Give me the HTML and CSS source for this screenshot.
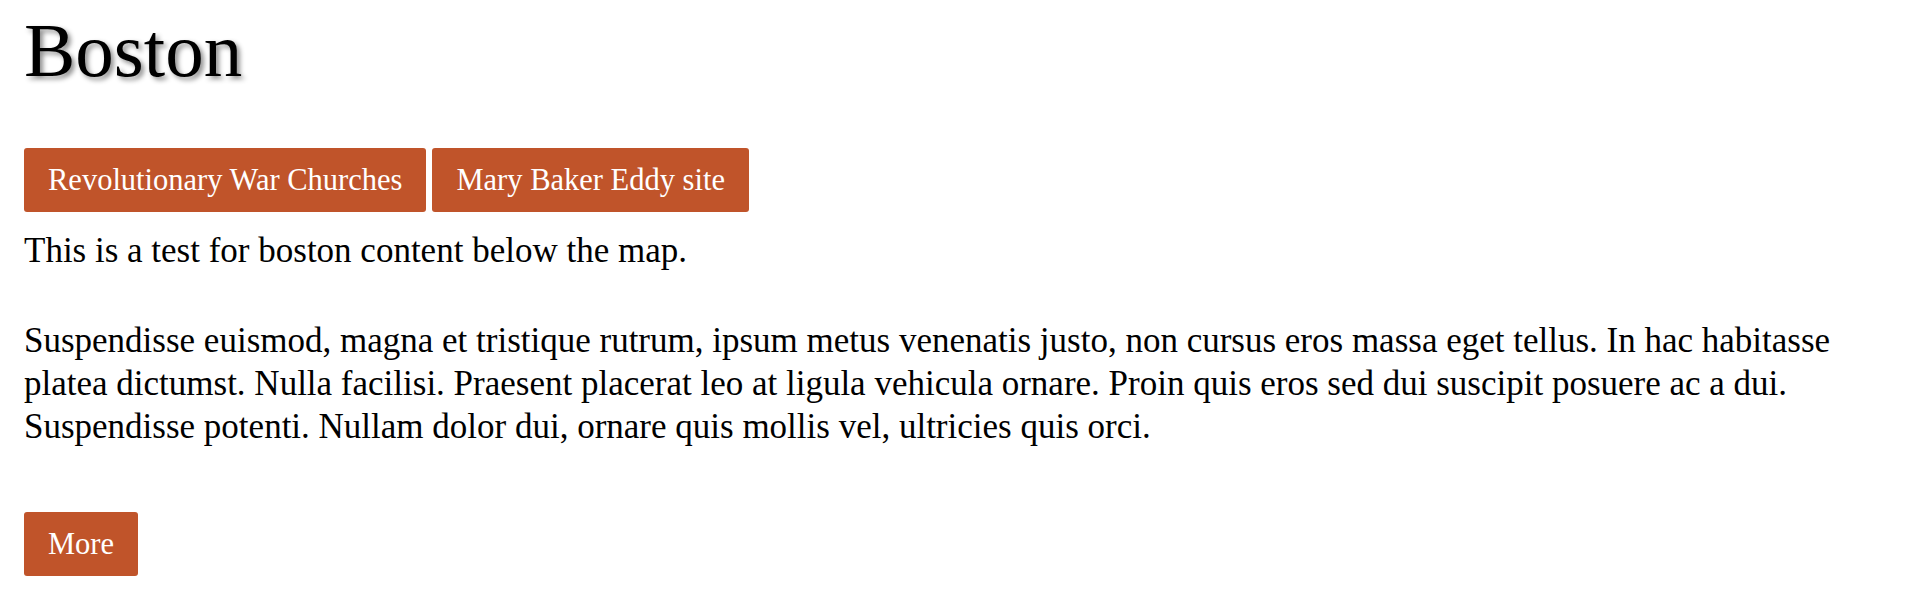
FILE: index.html
```html
<!DOCTYPE html>
<html lang="en">
<head>
    <meta charset="UTF-8">
    <meta name="viewport" content="width=device-width, initial-scale=1.0">
    <title>Boston</title>
    <link rel="stylesheet" href="styles.css">
</head>
<body>

<h1 class="city-title">Boston</h1>

<!-- Tour links -->
<div class="tour-links">
    <a class="btn" href="#">Revolutionary War Churches</a>
    <a class="btn" href="#">Mary Baker Eddy site</a>
</div>

<div class="city-content">
    <p class="intro">This is a test for boston content below the map.</p>
    <p>Suspendisse euismod, magna et tristique rutrum, ipsum metus venenatis justo, non cursus eros massa eget tellus. In hac habitasse platea dictumst. Nulla facilisi. Praesent placerat leo at ligula vehicula ornare. Proin quis eros sed dui suscipit posuere ac a dui. Suspendisse potenti. Nullam dolor dui, ornare quis mollis vel, ultricies quis orci.</p>
</div>

<a class="btn more" href="#">More</a>

</body>
</html>
```

FILE: styles.css
```css
* {
    margin: 0;
    padding: 0;
    box-sizing: border-box;
}

body {
    background: #fff;
    color: #000;
    font-family: 'Liberation Serif', 'Times New Roman', serif;
    font-size: 35px;
    line-height: 43px;
    padding: 12px 24px 0 24px;
}

.city-title {
    font-size: 77px;
    line-height: 77px;
    font-weight: normal;
    text-shadow: 3px 3px 5px rgba(0, 0, 0, 0.45);
}

.tour-links {
    display: flex;
    gap: 6px;
    margin-top: 59px;
}

.btn {
    display: inline-block;
    background-color: #c0542a;
    color: #fff;
    text-decoration: none;
    font-size: 30.5px;
    line-height: 32px;
    padding: 16px 24px;
    border-radius: 3px;
}

.city-content {
    margin-top: 17px;
}

.city-content .intro {
    margin-bottom: 47px;
}

/* More button */
.more {
    margin-top: 64px;
}
```
